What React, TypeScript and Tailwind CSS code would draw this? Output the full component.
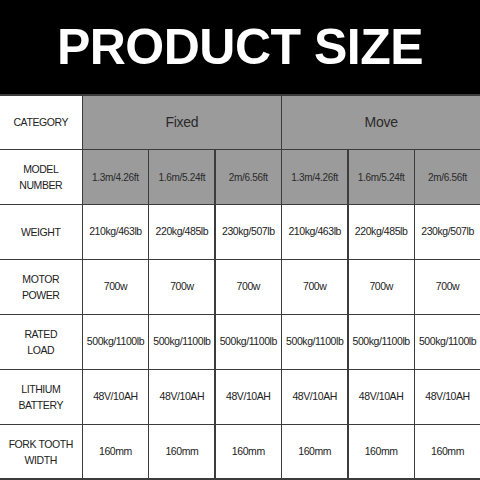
import React from "react";

const rows: { label: string[]; values: string[] }[] = [
  { label: ["WEIGHT"], values: ["210kg/463lb", "220kg/485lb", "230kg/507lb", "210kg/463lb", "220kg/485lb", "230kg/507lb"] },
  { label: ["MOTOR", "POWER"], values: ["700w", "700w", "700w", "700w", "700w", "700w"] },
  { label: ["RATED", "LOAD"], values: Array(6).fill("500kg/1100lb") },
  { label: ["LITHIUM", "BATTERY"], values: Array(6).fill("48V/10AH") },
  { label: ["FORK TOOTH", "WIDTH"], values: Array(6).fill("160mm") },
];

const models = ["1.3m/4.26ft", "1.6m/5.24ft", "2m/6.56ft", "1.3m/4.26ft", "1.6m/5.24ft", "2m/6.56ft"];

function Label({ lines }: { lines: string[] }) {
  return (
    <div className="bg-white flex flex-col items-center justify-center text-[10.5px] leading-[16px] text-[#222] tracking-[-0.04em] text-center">
      {lines.map((l) => (
        <span key={l}>{l}</span>
      ))}
    </div>
  );
}

export default function App() {
  return (
    <div className="w-[480px] h-[480px] flex flex-col bg-white" style={{ fontFamily: '"Liberation Sans", Arial, sans-serif' }}>
      <div className="h-[94px] bg-black flex items-center justify-center">
        <span className="text-white font-bold text-[50px] leading-none tracking-[-0.01em]">PRODUCT SIZE</span>
      </div>
      <div className="flex-1 grid grid-cols-[81.5px_repeat(6,1fr)] grid-rows-[repeat(7,1fr)] gap-[1.5px] pt-[1.5px] pb-[1.5px] bg-[#3c3c3c]">
        <Label lines={["CATEGORY"]} />
        <div className="col-span-3 bg-[#9b9b9b] flex items-center justify-center text-[14px] tracking-[-0.02em] text-[#2a2a2a]">Fixed</div>
        <div className="col-span-3 bg-[#9b9b9b] flex items-center justify-center text-[14px] tracking-[-0.02em] text-[#2a2a2a]">Move</div>
        <Label lines={["MODEL", "NUMBER"]} />
        {models.map((m, i) => (
          <div key={i} className="bg-[#9b9b9b] flex items-center justify-center text-[10px] tracking-[-0.03em] text-[#2a2a2a]">
            {m}
          </div>
        ))}
        {rows.map((r) => (
          <React.Fragment key={r.label.join(" ")}>
            <Label lines={r.label} />
            {r.values.map((v, i) => (
              <div key={i} className="bg-white flex items-center justify-center text-[10.5px] tracking-[-0.04em] text-[#222] whitespace-nowrap">
                {v}
              </div>
            ))}
          </React.Fragment>
        ))}
      </div>
    </div>
  );
}
